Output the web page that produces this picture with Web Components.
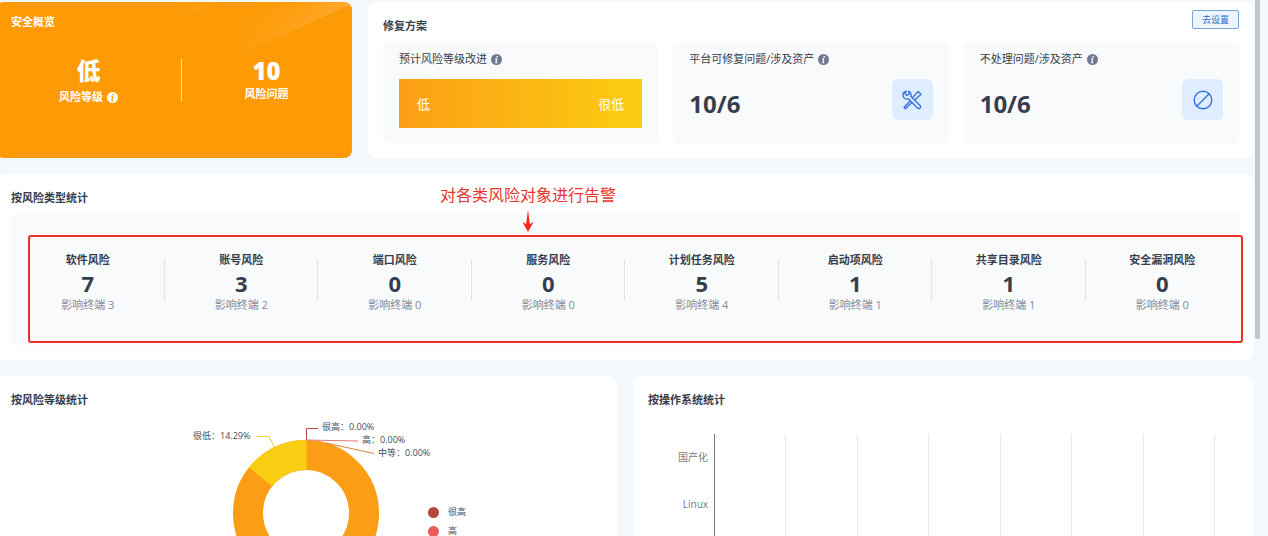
<!DOCTYPE html>
<html lang="zh-CN">
<head>
<meta charset="utf-8">
<title>安全概览</title>
<style>
html,body{margin:0;background:#f3f8fc}
body{font-family:"Open Sans","Noto Sans CJK SC",sans-serif;font-size:11px;line-height:16px;color:#363e4d}
</style>
</head>
<body>
<risk-dashboard></risk-dashboard>
<script>
const define = (name, html, setup) => {
  const t = document.createElement('template');
  t.innerHTML = html;
  customElements.define(name, class extends HTMLElement {
    connectedCallback() {
      if (this.shadowRoot) return;
      this.attachShadow({mode: 'open'}).append(t.content.cloneNode(true));
      if (setup) setup(this, this.shadowRoot);
    }
  });
};

define('info-icon', `<style>:host{display:block;width:11px;height:11px;flex:none}svg{display:block}</style>
<svg width="11" height="11" viewBox="0 0 11 11"><circle cx="5.5" cy="5.5" r="5.5" fill="currentColor"/>
<g fill="none" stroke="var(--mark,#fff)" stroke-width="1.4"><path d="M6.2 2v1.5"/><path d="M4.3 4.8h1.3L4.9 8.6h1.3" stroke-width="1.2"/></g></svg>`);

define('panel-card', `<style>
:host{display:block;background:#fff;border-radius:8px;box-sizing:border-box;padding:8px 15px 15px;min-width:0}
header{display:flex;justify-content:space-between;align-items:flex-start;padding-bottom:8px}
h2{margin:8px 0 0;font-size:11px;line-height:16px;font-weight:700}
</style><header><h2></h2><slot name="action"></slot></header><slot></slot>`,
 (h, r) => { r.querySelector('h2').textContent = h.getAttribute('heading'); });

define('overview-card', `<style>
:host{display:block;position:relative;background:#fe9a05;border-radius:8px;color:#fff;overflow:hidden;box-sizing:border-box;padding-top:12px}
.glow{position:absolute;inset:0;width:100%;height:100%}
h2{position:relative;margin:0 15px;font-size:11px;line-height:16px;font-weight:700}
.cols{position:relative;display:grid;grid-template-columns:13fr 12fr;margin-top:27px}
.col{display:flex;flex-direction:column;align-items:center;height:56px;font-weight:700}
.col+.col{background:linear-gradient(#ffe0ae,#ffe0ae) 0 2px/1px 42px no-repeat}
b{font-size:24px;line-height:28px}
.tag{display:flex;align-items:center;gap:4px;line-height:18px}
.level{padding-top:3px}
info-icon{--mark:#fe9a05}
</style>
<svg class="glow" viewBox="0 0 356 156" preserveAspectRatio="none" aria-hidden="true">
<defs><linearGradient id="a" x1="356" y1="0" x2="230" y2="56" gradientUnits="userSpaceOnUse"><stop stop-color="#fff" stop-opacity=".16"/><stop offset="1" stop-color="#fff" stop-opacity="0"/></linearGradient>
<linearGradient id="c" x1="291" y1="31" x2="273" y2="-9" gradientUnits="userSpaceOnUse"><stop stop-color="#fff"/><stop offset="1" stop-color="#fff" stop-opacity="0"/></linearGradient>
<mask id="m"><path d="M0 0H356V156H0z" fill="url(#c)"/></mask>
<linearGradient id="b" x1="220" y1="0" x2="172" y2="24" gradientUnits="userSpaceOnUse"><stop stop-color="#fff" stop-opacity=".08"/><stop offset="1" stop-color="#fff" stop-opacity="0"/></linearGradient></defs>
<path d="M356 2 226 61 190 0H356z" fill="url(#a)" mask="url(#m)"/><path d="M220 0 172 24 184 0z" fill="url(#b)" opacity=".5"/></svg>
<h2>安全概览</h2>
<div class="cols"><div class="col"><b>低</b><span class="tag level">风险等级<info-icon></info-icon></span></div>
<div class="col"><b>10</b><span class="tag">风险问题</span></div></div>`);

define('fix-tile', `<style>
:host{display:block;box-sizing:border-box;background:#f8fafc;border-radius:4px;padding:9px 16px 14px;min-width:0}
.label{display:flex;align-items:center;gap:4px}
info-icon{color:#717891}
.body{margin-top:12px}
</style><div class="label"><span></span><info-icon></info-icon></div><div class="body"><slot></slot></div>`,
 (h, r) => { r.querySelector('span').textContent = h.getAttribute('label'); });

define('level-shift', `<style>
:host{display:flex;justify-content:space-between;align-items:center;height:49px;padding:0 18px;background:linear-gradient(90deg,#fc9e15,#fbcd12);color:#fff;font-size:13px}
</style><span>低</span><span>很低</span>`);

define('fix-count', `<style>
:host{display:flex;justify-content:space-between;align-items:flex-start}
b{font-size:24px;line-height:50px}
.box{display:flex;width:41px;height:41px;border-radius:6px;background:#deedff;color:#3a70d8;align-items:center;justify-content:center}
</style><b></b><span class="box"><slot></slot></span>`,
 (h, r) => { r.querySelector('b').textContent = h.getAttribute('value'); });

define('setup-button', `<style>
:host{display:block}
button{display:block;box-sizing:border-box;width:47px;height:19px;padding:0;border:1px solid #76a5dc;border-radius:2px;background:#edf5ff;color:#2d6fc4;font:inherit;font-size:9px;line-height:17px}
</style><button type="button"><slot></slot></button>`);

define('risk-stat', `<style>
:host{display:flex;flex-direction:column;align-items:center;text-align:center}
h3{margin:0;font-size:11px;line-height:16px;font-weight:700}
b{font-size:22px;line-height:30px}
span{color:#858a96;line-height:14px}
</style><h3></h3><b></b><span></span>`,
 (h, r) => {
  r.querySelector('h3').textContent = h.getAttribute('label');
  r.querySelector('b').textContent = h.getAttribute('value');
  r.querySelector('span').textContent = '影响终端 ' + h.getAttribute('hosts');
 });

define('risk-stats', `<style>
:host{display:grid;grid-template-columns:repeat(8,1fr);position:relative;background:#f8fafc;border-radius:4px;padding:38px 0 32px;box-sizing:border-box;height:131px}
risk-stat:not(:last-of-type){background:linear-gradient(#dfe2e7,#dfe2e7) 100% 7px/1px 42px no-repeat}
.frame{position:absolute;left:17px;right:-4px;top:21px;bottom:2px;border:2px solid #ee3024;border-radius:3px}
.note{position:absolute;left:429px;top:-31px;color:#e8372c;font-size:16px;line-height:24px;white-space:nowrap}
.note svg{display:block;margin:3px 0 0 82px}
</style>
<div class="frame"></div>
<div class="note">对各类风险对象进行告警<svg width="12" height="22" viewBox="0 0 12 22"><path d="M6 0 7.8 14 11.5 12 6 22 .5 12 4.2 14z" fill="#fb2418"/></svg></div>`,
 (h, r) => {
  for (const [l, v, n] of [['软件风险',7,3],['账号风险',3,2],['端口风险',0,0],['服务风险',0,0],['计划任务风险',5,4],['启动项风险',1,1],['共享目录风险',1,1],['安全漏洞风险',0,0]]) {
    const e = document.createElement('risk-stat');
    e.setAttribute('label', l); e.setAttribute('value', v); e.setAttribute('hosts', n);
    r.append(e);
  }
 });

define('level-donut', `<style>:host{display:flex;justify-content:center}svg{display:block;flex:none}text{font-size:9px;fill:#454b58}</style>
<svg width="341" height="172" viewBox="0 8 341 172" role="img" aria-label="按风险等级统计">
<circle cx="170" cy="105" r="58" fill="none" stroke="#fc9e15" stroke-width="30"/>
<path d="M113 59.500A73 73 0 0 1 170.500 32V62A43 43 0 0 0 136.400 78.200z" fill="#fbcd12"/>
<g fill="none"><path d="M121 28.500H133L138.500 39.500" stroke="#f3ce35"/><path d="M170.500 32V20.500H182" stroke="#b5473c"/><path d="M170 32 222 33" stroke="#e3797a"/><path d="M190 35 238 45.500" stroke="#dc7e3e"/></g>
<text x="57" y="31">很低：14.29%</text><text x="186" y="22">很高：0.00%</text><text x="226" y="35">高：0.00%</text><text x="242" y="48">中等：0.00%</text>
<circle cx="297.500" cy="104.500" r="5.500" fill="#b5483d"/><text x="312" y="107">很高</text>
<circle cx="297.500" cy="123.500" r="5.500" fill="#e85c5c"/><text x="312" y="126">高</text>
</svg>`);

define('os-chart', `<style>
:host{display:grid;grid-template-columns:60px 1fr;column-gap:6px;margin-right:24px;height:190px}
ul{list-style:none;margin:0;padding:0;text-align:right;font-size:10px;color:#757b88}
li{line-height:47px}
.plot{display:grid;grid-template-columns:repeat(7,1fr);border-left:1px solid #777a82}
.plot i{border-right:1px solid #e6e7ef}
</style><ul><li>国产化</li><li>Linux</li></ul><div class="plot"><i></i><i></i><i></i><i></i><i></i><i></i><i></i></div>`);

define('risk-dashboard', `<style>
:host{display:block;position:relative;height:100vh;overflow:hidden}
main{display:grid;gap:16px;margin:2px 14px 0 -4px}
.top{display:grid;grid-template-columns:356fr 886fr;gap:16px}
.bottom{display:grid;grid-template-columns:1fr 1fr;gap:16px}
.tiles{display:grid;grid-template-columns:repeat(3,1fr);gap:15px}
os-chart{margin-top:18px}
.thumb{position:absolute;right:8px;top:0;width:5px;height:339px;background:#c1c5c9;border-radius:0 0 3px 3px}
svg{display:block}
</style>
<main>
<div class="top"><overview-card></overview-card>
<panel-card heading="修复方案"><setup-button slot="action">去设置</setup-button>
<div class="tiles">
<fix-tile label="预计风险等级改进"><level-shift></level-shift></fix-tile>
<fix-tile label="平台可修复问题/涉及资产"><fix-count value="10/6">
<svg width="20" height="20" viewBox="0 0 20 20" fill="none" stroke="currentColor" stroke-width="1.400" stroke-linejoin="round"><path d="M4.200 1.200A4 4 0 0 0 1.200 6.500 4 4 0 0 0 6.300 8.800L15.500 18a1.700 1.700 0 0 0 2.500-2.500L8.800 6.300A4 4 0 0 0 6.500 1.200L7.200 4.200 4.800 5.500 3 3.500z"/><path d="M10.800 7.200 16.200 1.500 19 4.200 13 9.700"/><path d="M8.200 11 2 17.200 3.500 18.700 9.700 12.500"/></svg></fix-count></fix-tile>
<fix-tile label="不处理问题/涉及资产"><fix-count value="10/6">
<svg width="20" height="20" viewBox="0 0 20 20" fill="none" stroke="currentColor" stroke-width="1.400"><circle cx="10" cy="10" r="8.800"/><path d="M3.800 16.200 16.200 3.800"/></svg></fix-count></fix-tile>
</div></panel-card></div>
<panel-card heading="按风险类型统计"><risk-stats></risk-stats></panel-card>
<div class="bottom"><panel-card heading="按风险等级统计"><level-donut></level-donut></panel-card>
<panel-card heading="按操作系统统计"><os-chart></os-chart></panel-card></div>
</main><div class="thumb"></div>`);
</script>
</body>
</html>
